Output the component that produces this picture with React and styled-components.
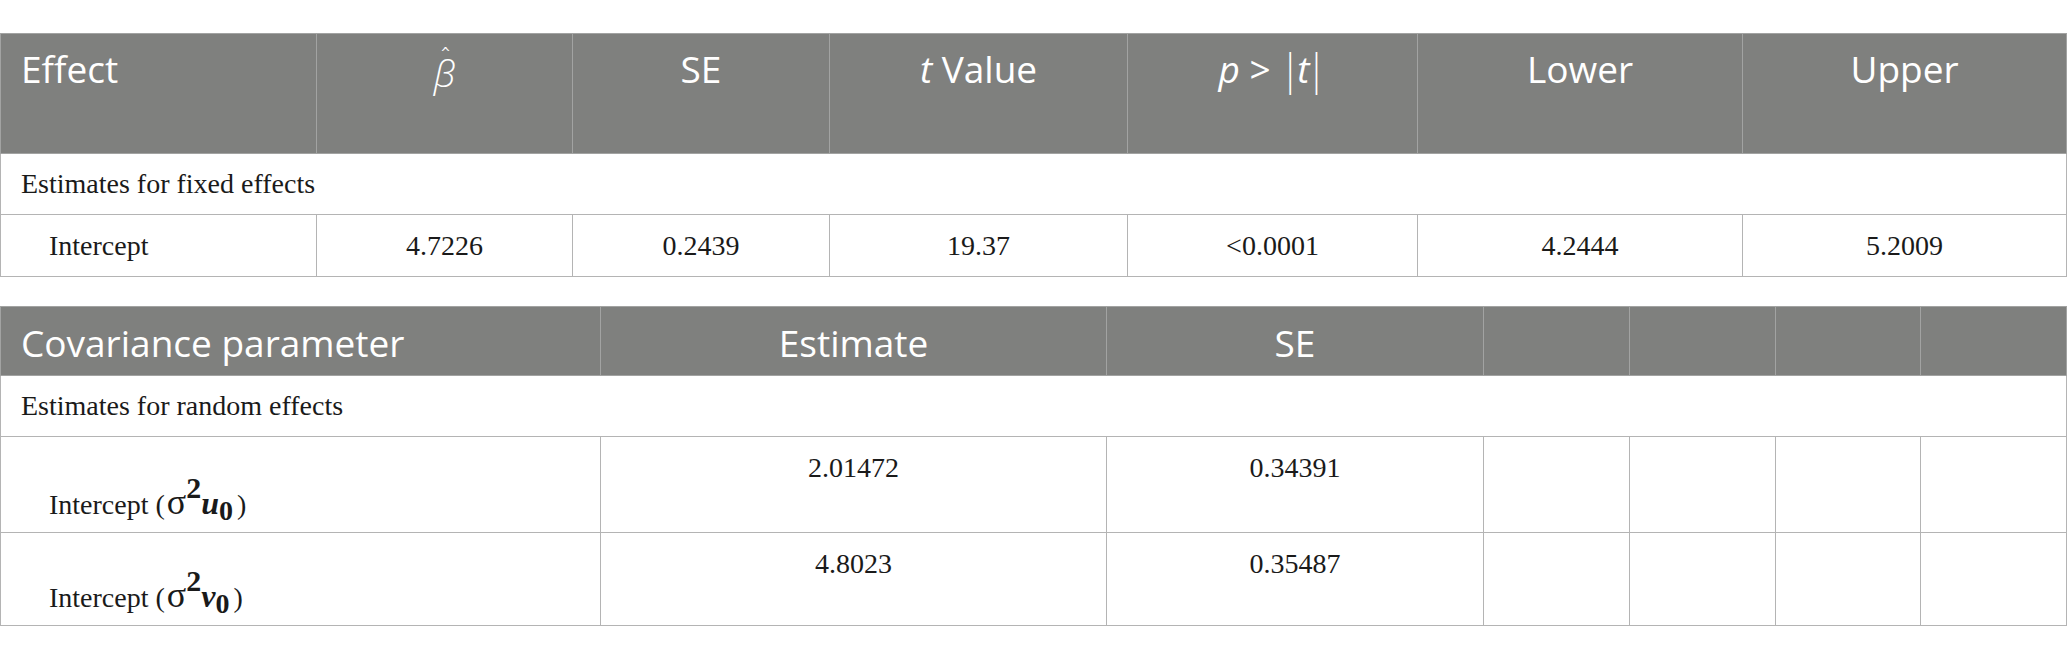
import React from "react";
import styled, { createGlobalStyle } from "styled-components";

const Global = createGlobalStyle`
  html, body { margin: 0; padding: 0; background: #ffffff; }
  body { font-family: "Liberation Serif", serif; }
`;

const Page = styled.div`
  display: flex;
  flex-direction: column;
  gap: 29px;
  padding-top: 33px;
  width: 2067px;
`;

const Table = styled.table`
  width: 2066px;
  border-collapse: collapse;
  table-layout: fixed;
`;

const Col = styled.col`
  width: ${(p) => p.$w}px;
`;

const Row = styled.tr`
  height: ${(p) => p.$h}px;
`;

const HeadCell = styled.th`
  background: #7f807e;
  color: #ffffff;
  font-family: "Open Sans", "Noto Sans", sans-serif;
  font-weight: 400;
  font-size: 37px;
  line-height: 50px;
  text-align: ${(p) => p.$align || "center"};
  vertical-align: top;
  padding: ${(p) => p.$pt || 10}px 20px 0 20px;
  border: 1px solid #a2a3a2;
  white-space: nowrap;
`;

const Cell = styled.td`
  font-family: "Liberation Serif", "Times New Roman", serif;
  font-size: 28px;
  line-height: 32px;
  color: #1a1a1a;
  text-align: ${(p) => p.$align || "center"};
  vertical-align: ${(p) => p.$valign || "middle"};
  padding: ${(p) => p.$pt || 0}px 20px ${(p) => p.$pb || 0}px
    ${(p) => p.$pl || 20}px;
  border: 1px solid #b4b4b4;
  white-space: nowrap;
`;

const Ital = styled.span`
  font-style: italic;
  margin: 0 ${(p) => p.$m || 0}px;
`;

const Hat = styled.span`
  position: relative;
  display: inline-block;
  font-style: italic;
  font-weight: 300;
  top: 4px;
  &::before {
    content: "ˆ";
    position: absolute;
    left: 50%;
    top: -16px;
    transform: translateX(-40%);
    font-style: normal;
    font-size: 26px;
  }
`;

const Bar = styled.span`
  font-weight: 300;
  display: inline-block;
  transform: scaleY(1.15);
`;

const Math = styled.span`
  font-family: "Liberation Serif", "Times New Roman", serif;
  font-size: 36px;
  margin-left: 2px;
  margin-right: 4px;
`;

const Sup = styled.sup`
  font-weight: 700;
  font-size: 30px;
  vertical-align: 16px;
  line-height: 0;
`;

const Var = styled.span`
  font-weight: 700;
  font-style: italic;
  font-size: 32px;
`;

const Sub = styled.sub`
  font-weight: 700;
  font-size: 28px;
  vertical-align: -6px;
  line-height: 0;
`;

const fixedCols = [316, 256, 257, 298, 290, 325, 324];
const covCols = [600, 506, 377, 146, 146, 145, 146];

const fixedRow = ["4.7226", "0.2439", "19.37", "<0.0001", "4.2444", "5.2009"];

const covRows = [
  { v: "u", est: "2.01472", se: "0.34391", h: 96 },
  { v: "v", est: "4.8023", se: "0.35487", h: 93 },
];

export default function App() {
  return (
    <>
      <Global />
      <Page>
        <Table>
          <colgroup>
            {fixedCols.map((w, i) => (
              <Col key={i} $w={w} />
            ))}
          </colgroup>
          <thead>
            <Row $h={120}>
              <HeadCell $align="left">Effect</HeadCell>
              <HeadCell>
                <Hat>β</Hat>
              </HeadCell>
              <HeadCell>SE</HeadCell>
              <HeadCell>
                <Ital>t</Ital> Value
              </HeadCell>
              <HeadCell>
                <Ital>p</Ital> &gt; <Bar>|</Bar>
                <Ital $m={-3}>t</Ital>
                <Bar>|</Bar>
              </HeadCell>
              <HeadCell>Lower</HeadCell>
              <HeadCell>Upper</HeadCell>
            </Row>
          </thead>
          <tbody>
            <Row $h={61}>
              <Cell colSpan={7} $align="left">
                Estimates for fixed effects
              </Cell>
            </Row>
            <Row $h={62}>
              <Cell $align="left" $pl={48}>
                Intercept
              </Cell>
              {fixedRow.map((v, i) => (
                <Cell key={i}>{v}</Cell>
              ))}
            </Row>
          </tbody>
        </Table>

        <Table>
          <colgroup>
            {covCols.map((w, i) => (
              <Col key={i} $w={w} />
            ))}
          </colgroup>
          <thead>
            <Row $h={69}>
              <HeadCell $align="left" $pt={11}>
                Covariance parameter
              </HeadCell>
              <HeadCell $pt={11}>Estimate</HeadCell>
              <HeadCell $pt={11}>SE</HeadCell>
              <HeadCell $pt={11} />
              <HeadCell $pt={11} />
              <HeadCell $pt={11} />
              <HeadCell $pt={11} />
            </Row>
          </thead>
          <tbody>
            <Row $h={61}>
              <Cell colSpan={7} $align="left">
                Estimates for random effects
              </Cell>
            </Row>
            {covRows.map((r) => (
              <Row key={r.v} $h={r.h}>
                <Cell $align="left" $pl={48} $valign="bottom" $pb={11}>
                  Intercept (
                  <Math>
                    σ<Sup>2</Sup>
                    <Var>{r.v}</Var>
                    <Sub>0</Sub>
                  </Math>
                  )
                </Cell>
                <Cell $valign="top" $pt={15}>
                  {r.est}
                </Cell>
                <Cell $valign="top" $pt={15}>
                  {r.se}
                </Cell>
                <Cell />
                <Cell />
                <Cell />
                <Cell />
              </Row>
            ))}
          </tbody>
        </Table>
      </Page>
    </>
  );
}
